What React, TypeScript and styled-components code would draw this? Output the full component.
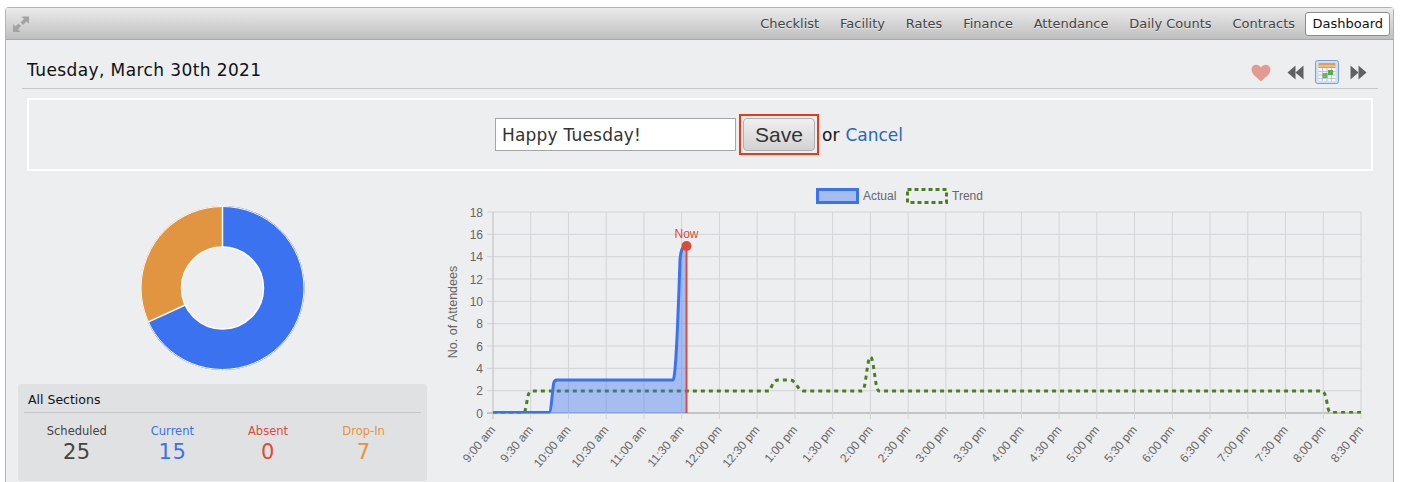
import React from "react";
import styled, { createGlobalStyle } from "styled-components";

const NAV_ITEMS = ["Checklist", "Facility", "Rates", "Finance", "Attendance", "Daily Counts", "Contracts", "Dashboard"];

const TIME_LABELS = [
    "9:00 am", "9:30 am", "10:00 am", "10:30 am", "11:00 am", "11:30 am", "12:00 pm", "12:30 pm",
    "1:00 pm", "1:30 pm", "2:00 pm", "2:30 pm", "3:00 pm", "3:30 pm", "4:00 pm", "4:30 pm",
    "5:00 pm", "5:30 pm", "6:00 pm", "6:30 pm", "7:00 pm", "7:30 pm", "8:00 pm", "8:30 pm",
];

const STATS = [
    { label: "Scheduled", value: 25, color: "#444" },
    { label: "Current", value: 15, color: "#3a72f0" },
    { label: "Absent", value: 0, color: "#dd4b39" },
    { label: "Drop-In", value: 7, color: "#e5933c" },
];

const PLOT = { left: 493, right: 1361, top: 212, bottom: 413 };
const xAt = (i: number) => PLOT.left + ((PLOT.right - PLOT.left) / 23) * i;
const yAt = (v: number) => PLOT.bottom - ((PLOT.bottom - PLOT.top) / 18) * v;

const ACTUAL_LINE =
    "M493 412.5 L549 412.5 C551 412.5 552 395 553.5 384 C554 381 555 380 557 380 L673 380 C675 380 677 350 680 260 C681 250 682 246.5 686.5 246";
const TREND_LINE =
    "M493 412.5 L524 412.5 C526 412.5 527 396 529 393 C529.5 392 530 391 532 391 L769 391 C771 391 772 380 778 380 L790 380 C796 380 798 391 803 391 L862 391 C866 391 867 357 870.5 357 C874 357 875 391 879 391 L1321 391 C1324 391 1326 395 1327 403 C1328 410 1329 412.5 1332 412.5 L1361 412.5";

const GlobalStyle = createGlobalStyle`
    html, body {
        margin: 0;
        height: 482px;
        overflow: hidden;
        background: #fff;
        font-family: "DejaVu Sans", sans-serif;
    }
`;

const Panel = styled.div`
    margin: 7px 0 0 5px;
    width: 1389px;
    height: 475px;
    box-sizing: border-box;
    background: #edeef0;
    border: 1px solid #b4b4b4;
    border-bottom: 0;
    border-radius: 4px 4px 0 0;
`;

const Toolbar = styled.div`
    height: 32px;
    box-sizing: border-box;
    padding: 0 3px 0 6px;
    display: flex;
    align-items: center;
    background: linear-gradient(#ebebeb, #bfbfbf);
    border-bottom: 1px solid #a8a8a8;
`;

const Nav = styled.nav`
    margin-left: auto;
    display: flex;
    align-items: center;
`;

const NavItem = styled.a<{ $active?: boolean }>`
    font-size: 13px;
    line-height: 22px;
    padding: 0 ${(p) => (p.$active ? "6px" : "9.4px")};
    color: ${(p) => (p.$active ? "#111" : "#444")};
    text-shadow: ${(p) => (p.$active ? "none" : "0 1px 0 rgba(255,255,255,.6)")};
    background: ${(p) => (p.$active ? "#fff" : "transparent")};
    border: 1px solid ${(p) => (p.$active ? "#8c8c8c" : "transparent")};
    border-radius: 3px;
`;

const TitleRow = styled.div`
    margin: 0 15px 0 16px;
    height: 49px;
    box-sizing: border-box;
    padding: 12px 10px 0 5px;
    display: flex;
    align-items: center;
    justify-content: space-between;
    border-bottom: 1px solid #c4c5c7;
`;

const Title = styled.h1`
    margin: 0;
    font-size: 17px;
    font-weight: 400;
    letter-spacing: 0.4px;
    color: #111;
`;

const DateTools = styled.div`
    display: flex;
    align-items: center;
    gap: 11px;
    padding: 4px 1px 0 0;
`;

const FavouriteSlot = styled.span`
    display: flex;
    margin: 1px 5px 0 0;
`;

const EditorBox = styled.div`
    margin: 9px 20px 0 21px;
    height: 73px;
    box-sizing: border-box;
    border: 2px solid #fff;
    display: flex;
    align-items: center;
    justify-content: center;
    padding-right: 2px;
`;

const MessageInput = styled.input`
    width: 241px;
    height: 33px;
    box-sizing: border-box;
    padding: 0 6px;
    font-family: "DejaVu Sans", sans-serif;
    font-size: 17px;
    letter-spacing: 0.2px;
    color: #333;
    background: #fff;
    border: 1px solid #a5a5a5;
    outline: none;
`;

const SaveOutline = styled.div`
    margin-left: 3px;
    padding: 2px;
    border: 2px solid #e8391c;
    display: flex;
`;

const SaveButton = styled.button`
    width: 72px;
    height: 33px;
    padding: 0;
    font-family: "Liberation Sans", sans-serif;
    font-size: 21px;
    color: #333;
    background: linear-gradient(#f0f0f0, #d2d2d2);
    border: 1px solid #b0b0b0;
    border-radius: 4px;
`;

const OrText = styled.span`
    margin-left: 3px;
    font-size: 17px;
    color: #111;
`;

const CancelLink = styled.a`
    margin-left: 6px;
    font-size: 17px;
    color: #2a66b8;
`;

const Content = styled.div`
    display: flex;
    align-items: flex-start;
    margin-left: 12px;
`;

const LeftColumn = styled.div`
    width: 409px;
    flex: none;
    display: flex;
    flex-direction: column;
    align-items: center;
    padding-top: 35px;
`;

const StatsCard = styled.div`
    align-self: stretch;
    margin-top: 14px;
    height: 97px;
    box-sizing: border-box;
    padding: 0 6px;
    background: #e0e1e3;
    border-radius: 3px;
`;

const StatsHeading = styled.div`
    height: 28px;
    line-height: 31px;
    padding-left: 4px;
    font-size: 12.5px;
    color: #111;
    border-bottom: 1px solid #c4c5c7;
`;

const StatsGrid = styled.div`
    display: grid;
    grid-template-columns: repeat(4, 95.6px);
    padding: 10px 0 0 5px;
`;

const Stat = styled.div<{ $color: string }>`
    text-align: center;
    color: ${(p) => p.$color};
`;

const StatLabel = styled.div`
    font-size: 11.5px;
    line-height: 16px;
`;

const StatValue = styled.div`
    font-size: 21px;
    line-height: 26px;
    letter-spacing: 0.5px;
`;

const ChartSvg = styled.svg`
    display: block;
    flex: none;
    margin-left: 13px;
    font-family: "Liberation Sans", sans-serif;
`;

const ExpandIcon = () => (
    <svg width="18" height="18" viewBox="0 0 18 18" fill="#a3a3a3">
        <path d="M9.5 1.5 H17 V9 L14.6 6.6 L11 10 L8.5 7.5 L12 4 Z" />
        <path d="M1 9 L3.4 11.4 L6.5 8.5 L9 11 L6 14.4 L8.5 17 H1 Z" />
    </svg>
);

const HeartIcon = () => (
    <svg width="20" height="18" viewBox="0 0 20 18">
        <path
            d="M10 17.5 C7 14.5 0.5 10.5 0.5 5.6 C0.5 2.6 2.8 0.7 5.3 0.7 C7.3 0.7 9 1.8 10 3.6 C11 1.8 12.7 0.7 14.7 0.7 C17.2 0.7 19.5 2.6 19.5 5.6 C19.5 10.5 13 14.5 10 17.5 Z"
            fill="#e49a90"
        />
    </svg>
);

const SkipIcon = ({ back }: { back?: boolean }) => (
    <svg width="17" height="15" viewBox="0 0 17 15" fill="#5f6260">
        <g transform={back ? "matrix(-1 0 0 1 17 0)" : undefined}>
            <path d="M0.5 0.5 L8.5 7.5 L0.5 14.5 Z" />
            <path d="M8.5 0.5 L16.5 7.5 L8.5 14.5 Z" />
        </g>
    </svg>
);

const CalendarIcon = () => (
    <svg width="24" height="24" viewBox="0 0 24 24">
        <rect x="0.5" y="0.5" width="23" height="23" rx="2" fill="#cfdff5" stroke="#7d9ed2" />
        <rect x="3.5" y="3" width="17" height="18" fill="#f2f5f8" />
        <rect x="3.5" y="3" width="17" height="5" fill="#ec9a4e" />
        <rect x="3.5" y="5.5" width="17" height="1" fill="#f8d9b0" />
        <path d="M3.5 11.5 H20.5 M3.5 15 H20.5 M3.5 18.5 H20.5 M7.5 8 V21 M12 8 V21 M16.5 8 V21" stroke="#b4bcc9" strokeWidth="0.8" />
        <rect x="13" y="10" width="5" height="5" fill="#5ca94f" />
        <rect x="7.5" y="13" width="5" height="5" fill="#6cb35f" />
    </svg>
);

const Donut = () => {
    const cx = 82;
    const cy = 82;
    const sweep = ((15 / 22) * 360 * Math.PI) / 180;
    const ex = cx + 61.5 * Math.sin(sweep);
    const ey = cy - 61.5 * Math.cos(sweep);
    return (
        <svg width="164" height="164" viewBox="0.5 0 164 164">
            <circle cx={cx} cy={cy} r="61.5" fill="none" stroke="#e29540" strokeWidth="41" />
            <path d={`M${cx} ${cy - 61.5} A61.5 61.5 0 1 1 ${ex} ${ey}`} fill="none" stroke="#3a72f0" strokeWidth="41" />
            <line x1={cx} y1="0" x2={cx} y2="41" stroke="#fff" strokeWidth="1.5" />
            <line x1={cx + 41 * Math.sin(sweep)} y1={cy - 41 * Math.cos(sweep)} x2={cx + 82 * Math.sin(sweep)} y2={cy - 82 * Math.cos(sweep)} stroke="#fff" strokeWidth="1.5" />
            <circle cx={cx} cy={cy} r="81.5" fill="none" stroke="#fff" strokeWidth="1" />
            <circle cx={cx} cy={cy} r="41" fill="#edeef0" stroke="#fff" strokeWidth="1.5" />
        </svg>
    );
};

const Chart = () => {
    const yTicks = [0, 2, 4, 6, 8, 10, 12, 14, 16, 18];
    return (
        <ChartSvg width="940" height="300" viewBox="440 171 940 300">
            <defs>
                <clipPath id="plot-area">
                    <rect x={PLOT.left} y="200" width={PLOT.right - PLOT.left} height="213.5" />
                </clipPath>
            </defs>

            {/* legend */}
            <rect x="817.5" y="189.5" width="40" height="13" fill="#a5bcef" stroke="#3a72f0" strokeWidth="3" />
            <text x="863" y="200" fontSize="12" fill="#666">Actual</text>
            <rect x="907.5" y="189.5" width="39" height="13" fill="none" stroke="#4a7f22" strokeWidth="3" strokeDasharray="4 3" />
            <text x="952" y="200" fontSize="12" fill="#666">Trend</text>

            {/* grid */}
            {yTicks.map((v) => (
                <g key={v}>
                    <line x1={PLOT.left - 6} x2={PLOT.right} y1={yAt(v)} y2={yAt(v)} stroke={v === 0 ? "#9a9a9a" : "#d3d4d6"} />
                    <text x={PLOT.left - 10} y={yAt(v) + 4.5} fontSize="12" textAnchor="end" fill="#666">{v}</text>
                </g>
            ))}
            {TIME_LABELS.map((label, i) => (
                <g key={label}>
                    <line x1={xAt(i)} x2={xAt(i)} y1={PLOT.top} y2={PLOT.bottom + 6} stroke={i === 0 ? "#bdbec0" : "#d3d4d6"} />
                    <text
                        x={xAt(i) + 3}
                        y={PLOT.bottom + 17}
                        fontSize="12"
                        textAnchor="end"
                        fill="#666"
                        transform={`rotate(-50 ${xAt(i) + 3} ${PLOT.bottom + 17})`}
                    >
                        {label}
                    </text>
                </g>
            ))}
            <text x="457" y="312" fontSize="12.5" textAnchor="middle" fill="#666" transform="rotate(-90 457 312)">
                No. of Attendees
            </text>

            {/* series */}
            <g clipPath="url(#plot-area)">
                <path d={TREND_LINE} fill="none" stroke="#4a7f22" strokeWidth="3" strokeDasharray="4 4" />
                <path d={`${ACTUAL_LINE} L686.5 413 L493 413 Z`} fill="rgba(58,114,240,.4)" />
                <path d={ACTUAL_LINE} fill="none" stroke="#3a72f0" strokeWidth="3" />
            </g>

            {/* now marker */}
            <line x1="686.5" x2="686.5" y1="246" y2="413" stroke="#dd4b39" strokeWidth="2" />
            <circle cx="686.5" cy="246" r="5" fill="#dd4b39" />
            <text x="686.5" y="238" fontSize="12" textAnchor="middle" fill="#dd4b39">Now</text>
        </ChartSvg>
    );
};

const App = () => {
    return (
        <>
            <GlobalStyle />
            <Panel>
                <Toolbar>
                    <ExpandIcon />
                    <Nav>
                        {NAV_ITEMS.map((item) => (
                            <NavItem key={item} $active={item === "Dashboard"}>{item}</NavItem>
                        ))}
                    </Nav>
                </Toolbar>
                <TitleRow>
                    <Title>Tuesday, March 30th 2021</Title>
                    <DateTools>
                        <FavouriteSlot>
                            <HeartIcon />
                        </FavouriteSlot>
                        <SkipIcon back />
                        <CalendarIcon />
                        <SkipIcon />
                    </DateTools>
                </TitleRow>
                <EditorBox>
                    <MessageInput defaultValue="Happy Tuesday!" />
                    <SaveOutline>
                        <SaveButton>Save</SaveButton>
                    </SaveOutline>
                    <OrText>or</OrText>
                    <CancelLink>Cancel</CancelLink>
                </EditorBox>
                <Content>
                    <LeftColumn>
                        <Donut />
                        <StatsCard>
                            <StatsHeading>All Sections</StatsHeading>
                            <StatsGrid>
                                {STATS.map((s) => (
                                    <Stat key={s.label} $color={s.color}>
                                        <StatLabel>{s.label}</StatLabel>
                                        <StatValue>{s.value}</StatValue>
                                    </Stat>
                                ))}
                            </StatsGrid>
                        </StatsCard>
                    </LeftColumn>
                    <Chart />
                </Content>
            </Panel>
        </>
    );
};

export default App;
